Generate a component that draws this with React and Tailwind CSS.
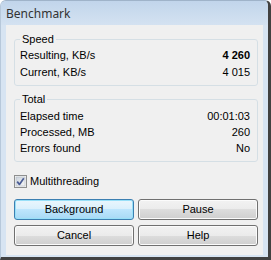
import { useState } from 'react';

const speedRows = [
    { label: "Resulting, KB/s", value: "4 260", bold: true },
    { label: "Current, KB/s", value: "4 015" },
];

const totalRows = [
    { label: "Elapsed time", value: "00:01:03" },
    { label: "Processed, MB", value: "260" },
    { label: "Errors found", value: "No" },
];

const GroupBox = ({ title, rows, rowClass, className = "" }) => {
    return (
        <fieldset className={`border border-[#d5dfe5] rounded-[3px] ${className}`}>
            <legend className="ml-[5px] px-[2px] leading-[14px] text-[11px] text-black">{title}</legend>
            {rows.map(row => (
                <div key={row.label} className={`flex flex-row justify-between pl-[5px] pr-[7px] ${rowClass}`}>
                    <span>{row.label}</span>
                    <span className={row.bold ? "font-bold" : ""}>{row.value}</span>
                </div>
            ))}
        </fieldset>
    );
};

const Button = ({ children, primary = false }) => {
    return (
        <button
            className={
                primary
                    ? "w-[120px] h-[21px] rounded-[3px] border border-[#3c7fb1] bg-[linear-gradient(to_bottom,#eaf6fd_0%,#d9f0fc_50%,#bee6fd_50%,#a7d9f5_100%)] shadow-[inset_0_0_0_1px_#98e0f8] text-[11px] leading-[19px] text-black"
                    : "w-[120px] h-[21px] rounded-[3px] border border-[#707070] bg-[linear-gradient(to_bottom,#f2f2f2_0%,#ebebeb_50%,#dddddd_50%,#cfcfcf_100%)] shadow-[inset_0_0_0_1px_#fbfbfb] text-[11px] leading-[19px] text-black"
            }
        >
            {children}
        </button>
    );
};

const CheckBox = ({ checked }) => (
    <svg width="13" height="13" viewBox="0 0 13 13">
        <defs>
            <linearGradient id="cbfill" x1="0" y1="0" x2="1" y2="1">
                <stop offset="0" stopColor="#cbd3dc" />
                <stop offset="1" stopColor="#f6f6f6" />
            </linearGradient>
        </defs>
        <rect x="0.5" y="0.5" width="12" height="12" fill="#f4f4f4" stroke="#8e8f8f" />
        <rect x="2" y="2" width="9" height="9" fill="url(#cbfill)" stroke="#b4bcc6" strokeWidth="0.6" />
        {checked && (
            <path d="M3.2 6.6 L5.4 9.4 L9.8 3.2" fill="none" stroke="#4b5d96" strokeWidth="1.7" strokeLinejoin="round" />
        )}
    </svg>
);

const App = () => {
    const [multi, setMulti] = useState(true);

    return (
        <div className="w-[271px] h-[260px] flex flex-col rounded-t-[6px] border-t border-l border-t-[#9fb3c9] border-l-[#b7c8da] border-r-[3px] border-b-[3px] border-r-[#414141] border-b-[#414141] bg-[#d7e4f2] overflow-hidden font-['Liberation_Sans',Arial,sans-serif] text-[11px] text-black">
            <div className="h-[24px] shrink-0 flex items-center pl-[5px] bg-[linear-gradient(to_bottom,#c1d5eb,#d4e2f1)]">
                <span className="font-['Noto_Sans',sans-serif] text-[12px] text-[#333333] mt-[1px]">Benchmark</span>
            </div>
            <div className="flex-1 flex flex-col pl-[5px] pr-[5px] pb-[2px]">
                <div className="flex-1 bg-[#f0f0f0] pl-[8px] pr-[5px] flex flex-col">
                    <GroupBox
                        title="Speed"
                        rows={speedRows}
                        rowClass="h-[17px] leading-[17px]"
                        className="mt-[7px] pt-[1px] pb-[4px]"
                    />
                    <GroupBox
                        title="Total"
                        rows={totalRows}
                        rowClass="h-[16px] leading-[16px]"
                        className="mt-[6px] pt-[2px] pb-[5px]"
                    />
                    <label className="mt-[13px] flex flex-row items-center gap-[3px] h-[13px] cursor-default" onClick={() => setMulti(!multi)}>
                        <CheckBox checked={multi} />
                        <span className="leading-[13px]">Multithreading</span>
                    </label>
                    <div className="mt-[11px] flex flex-row gap-[4px]">
                        <Button primary>Background</Button>
                        <Button>Pause</Button>
                    </div>
                    <div className="mt-[5px] flex flex-row gap-[4px]">
                        <Button>Cancel</Button>
                        <Button>Help</Button>
                    </div>
                </div>
            </div>
        </div>
    );
};

export default App;
